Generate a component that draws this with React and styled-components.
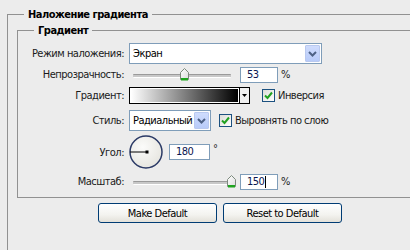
import React from "react";
import styled, { createGlobalStyle } from "styled-components";

const Global = createGlobalStyle`
  html, body { margin: 0; padding: 0; background: #ececec; overflow: hidden; }
  body {
    font-family: "DejaVu Sans Condensed", "DejaVu Sans", sans-serif;
    font-stretch: condensed;
    font-size: 11px;
    letter-spacing: -0.5px;
    color: #1a1a1a;
  }
`;

const Page = styled.div`
  width: 410px;
  height: 250px;
  overflow: hidden;
`;

const Group = styled.fieldset`
  margin: ${(p) => (p.$outer ? "8px 0 0 7px" : "3px 0 0 0")};
  padding: ${(p) => (p.$outer ? "0 0 40px 9px" : "5px 0 4px 0")};
  border: none;
  border-top: 1px solid #919191;
  border-left: 1px solid #919191;
  border-bottom: ${(p) => (p.$outer ? "none" : "1px solid #919191")};
  width: ${(p) => (p.$outer ? "520px" : "100%")};
  min-width: 0;
  box-sizing: border-box;
`;

const Legend = styled.legend`
  font-weight: bold;
  line-height: 13px;
  padding: 0 4px;
  margin-left: ${(p) => p.$ml}px;
  color: #000;
`;

const Row = styled.div`
  display: grid;
  grid-template-columns: 106px auto;
  column-gap: 5px;
  align-items: center;
  height: ${(p) => p.$h}px;
`;

const Label = styled.div`
  text-align: right;
  white-space: nowrap;
`;

const Controls = styled.div`
  display: flex;
  align-items: center;
`;

const SelectBox = styled.div`
  width: ${(p) => p.$w}px;
  height: 21px;
  box-sizing: border-box;
  border: 1px solid #7f9db9;
  background: #fff;
  display: flex;
  align-items: center;
  justify-content: space-between;
  padding: 1px;
`;

const SelectText = styled.span`
  padding-left: 2px;
  color: #000;
`;

const SelectBtn = styled.div`
  width: 15px;
  height: 17px;
  box-sizing: border-box;
  border: 1px solid #b9c9ef;
  border-radius: 1px;
  background: linear-gradient(#cfdcfd, #b8cbf9);
  display: flex;
  align-items: center;
  justify-content: center;
`;

const SliderWrap = styled.div`
  position: relative;
  width: 107px;
  height: 14px;
`;

const Track = styled.div`
  position: absolute;
  left: 4px;
  right: 5px;
  top: 6px;
  height: 2px;
  border-top: 1px solid #9a9a9a;
  border-bottom: 1px solid #fff;
  background: #c8c8c8;
  border-radius: 1px;
`;

const Thumb = styled.svg`
  position: absolute;
  top: 0;
`;

const Input = styled.div`
  width: ${(p) => p.$w}px;
  height: 16px;
  box-sizing: border-box;
  border: 1px solid #7f9db9;
  background: #fff;
  color: #0a1650;
  padding-left: 6px;
  line-height: 14px;
  margin-left: ${(p) => p.$ml}px;
  display: flex;
  align-items: center;
`;

const Caret = styled.span`
  display: inline-block;
  width: 1px;
  height: 12px;
  margin-left: 1px;
  background: #000;
`;

const Unit = styled.span`
  margin-left: 3px;
  position: relative;
  top: ${(p) => p.$top || 0}px;
`;

const GradientBox = styled.div`
  width: 121px;
  height: 17px;
  box-sizing: border-box;
  border: 1px solid #000;
  display: flex;
  background: #fff;
`;

const GradientFill = styled.div`
  flex: 1;
  margin: 1px;
  background: linear-gradient(to right, #fff 0%, #000 100%);
`;

const GradientBtn = styled.div`
  width: 9px;
  border-left: 1px solid #000;
  background: #f0f0f0;
  display: flex;
  align-items: center;
  justify-content: center;
`;

const Check = styled.label`
  display: flex;
  align-items: center;
  gap: 3px;
  margin-left: ${(p) => p.$ml}px;
  white-space: nowrap;
`;

const Box = styled.span`
  width: 13px;
  height: 13px;
  box-sizing: border-box;
  border: 1px solid #1c5180;
  background: linear-gradient(135deg, #dcdcd7, #fff);
  display: flex;
  align-items: center;
  justify-content: center;
`;

const Dial = styled.svg`
  display: block;
`;

const ButtonRow = styled.div`
  display: flex;
  gap: 6px;
  margin: 5px 0 0 81px;
`;

const Button = styled.button`
  width: ${(p) => p.$w}px;
  height: 20px;
  border: 1px solid #003c74;
  border-radius: 3px;
  background: linear-gradient(#ffffff, #f3f3ef 60%, #e3e1d9);
  font: inherit;
  letter-spacing: inherit;
  color: #000;
  padding: 0;
`;

const Chevron = () => (
  <svg width="9" height="6" viewBox="0 0 9 6">
    <path d="M1 1 L4.5 4.5 L8 1" fill="none" stroke="#4d6185" strokeWidth="2" />
  </svg>
);

const Select = ({ w, children }) => (
  <SelectBox $w={w}>
    <SelectText>{children}</SelectText>
    <SelectBtn>
      <Chevron />
    </SelectBtn>
  </SelectBox>
);

const Slider = ({ value }) => {
  const center = 4 + (value / 150) * 98;
  return (
    <SliderWrap>
      <Track />
      <Thumb width="9" height="13" viewBox="0 0 9 13" style={{ left: center - 4.5 }}>
        <defs>
          <linearGradient id="tg" x1="0" y1="0" x2="1" y2="1">
            <stop offset="0" stopColor="#ffffff" />
            <stop offset="1" stopColor="#dcdcdc" />
          </linearGradient>
        </defs>
        <path d="M0.5 4.5 L4.5 0.5 L8.5 4.5 L8.5 11.5 L0.5 11.5 Z" fill="url(#tg)" stroke="#7d8a7d" />
        <rect x="1" y="10" width="7" height="2.5" fill="#1fa41f" />
      </Thumb>
    </SliderWrap>
  );
};

const Checkbox = ({ ml, children }) => (
  <Check $ml={ml}>
    <Box>
      <svg width="9" height="9" viewBox="0 0 9 9">
        <path d="M1 4.5 L3.5 7 L8 1.5" fill="none" stroke="#21a121" strokeWidth="2" />
      </svg>
    </Box>
    {children}
  </Check>
);

export default function App() {
  return (
    <Page>
      <Global />
      <Group $outer>
        <Legend $ml={7}>Наложение градиента</Legend>
        <Group>
          <Legend $ml={16}>Градиент</Legend>
          <Row $h={23}>
            <Label>Режим наложения:</Label>
            <Controls>
              <Select w={193}>Экран</Select>
            </Controls>
          </Row>
          <Row $h={19}>
            <Label>Непрозрачность:</Label>
            <Controls>
              <Slider value={53 * 1.5} />
              <Input $w={38} $ml={4}>53</Input>
              <Unit>%</Unit>
            </Controls>
          </Row>
          <Row $h={23}>
            <Label>Градиент:</Label>
            <Controls>
              <GradientBox>
                <GradientFill />
                <GradientBtn>
                  <svg width="5" height="3" viewBox="0 0 5 3">
                    <path d="M0 0 H5 L2.5 3 Z" fill="#000" />
                  </svg>
                </GradientBtn>
              </GradientBox>
              <Checkbox ml={12}>Инверсия</Checkbox>
            </Controls>
          </Row>
          <Row $h={27}>
            <Label>Стиль:</Label>
            <Controls>
              <Select w={82}>Радиальный</Select>
              <Checkbox ml={8}>Выровнять по слою</Checkbox>
            </Controls>
          </Row>
          <Row $h={36}>
            <Label>Угол:</Label>
            <Controls>
              <Dial width="34" height="34" viewBox="0 0 34 34">
                <defs>
                  <radialGradient id="dg" cx="0.4" cy="0.35" r="0.7">
                    <stop offset="0" stopColor="#fbfbfa" />
                    <stop offset="1" stopColor="#e6e5df" />
                  </radialGradient>
                </defs>
                <circle cx="17" cy="17" r="16" fill="url(#dg)" stroke="#2b3a66" strokeWidth="1.5" />
                <line x1="1" y1="17" x2="18" y2="17" stroke="#000" strokeWidth="1" />
                <rect x="16.5" y="15.5" width="3" height="3" fill="#000" />
              </Dial>
              <Input $w={41} $ml={6}>180</Input>
              <Unit $top={-4}>°</Unit>
            </Controls>
          </Row>
          <Row $h={23}>
            <Label>Масштаб:</Label>
            <Controls>
              <Slider value={150} />
              <Input $w={38} $ml={4}>
                150
                <Caret />
              </Input>
              <Unit>%</Unit>
            </Controls>
          </Row>
        </Group>
        <ButtonRow>
          <Button $w={119}>Make Default</Button>
          <Button $w={119}>Reset to Default</Button>
        </ButtonRow>
      </Group>
    </Page>
  );
}
